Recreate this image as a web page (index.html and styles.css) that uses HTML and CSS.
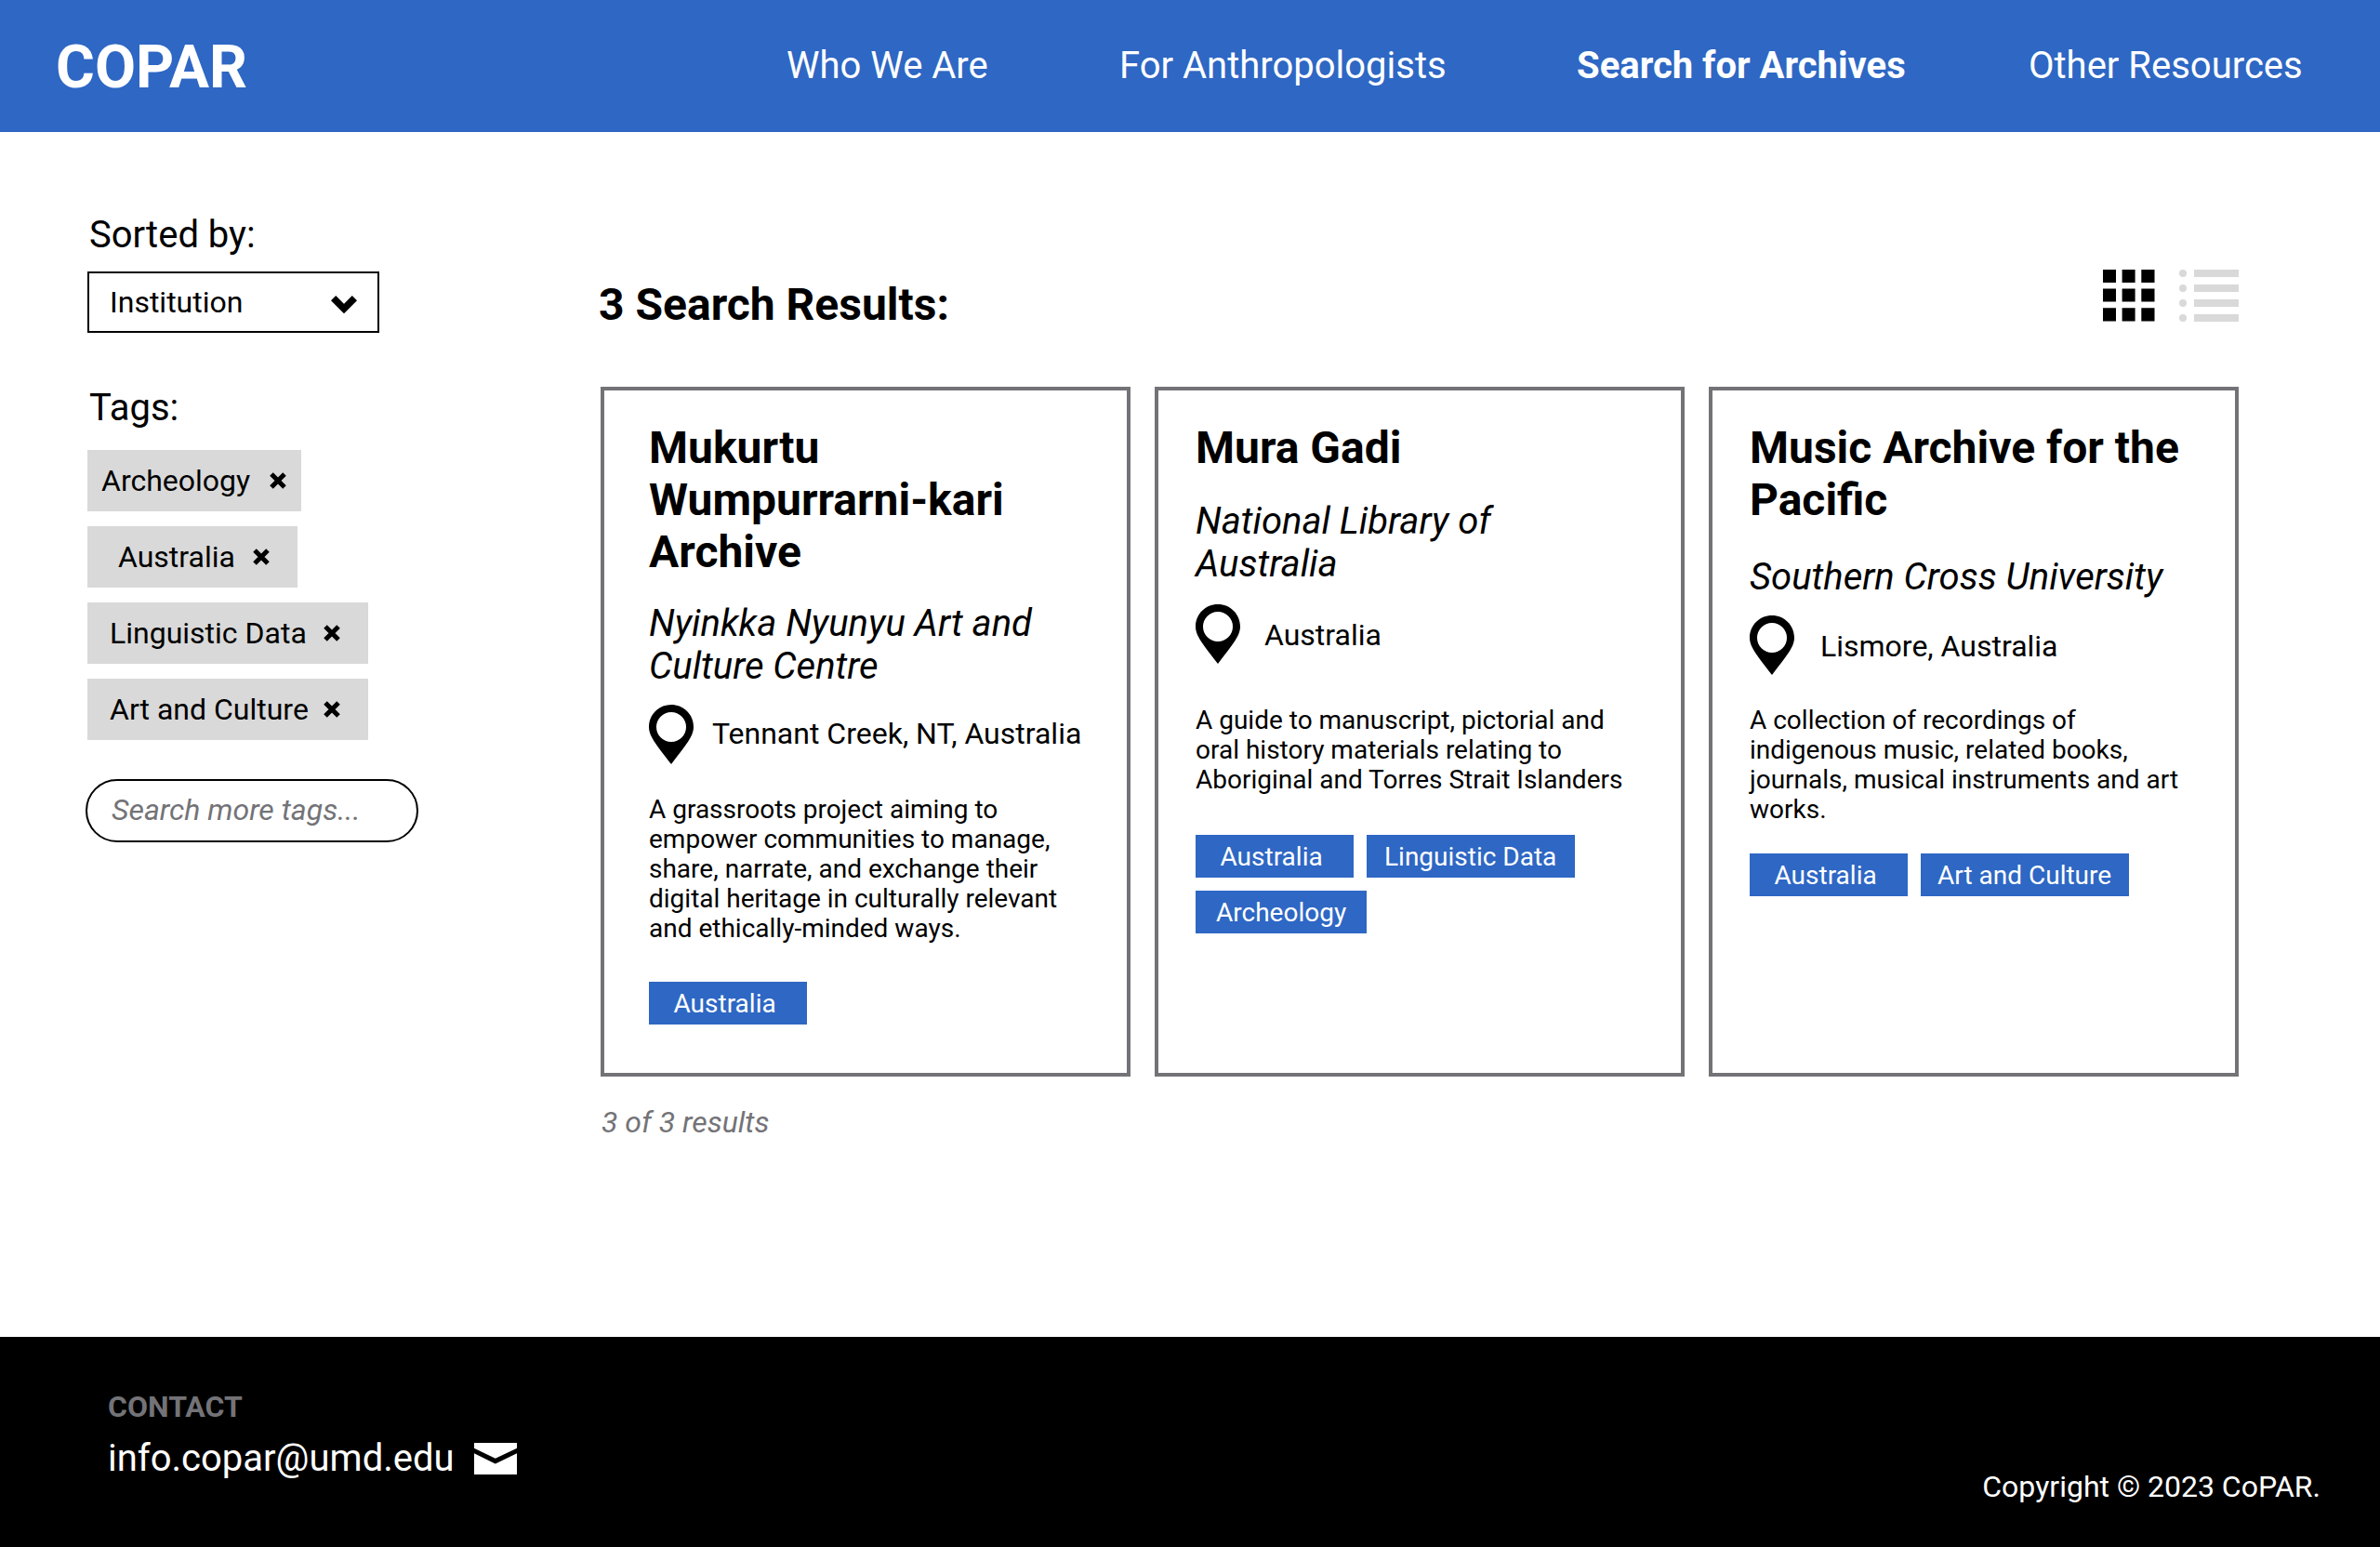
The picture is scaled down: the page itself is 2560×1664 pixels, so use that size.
FILE: index.html
```html
<!DOCTYPE html>
<html lang="en">
<head>
<meta charset="utf-8">
<title>COPAR - Search for Archives</title>
<link rel="stylesheet" href="styles.css">
</head>
<body>
<svg class="sprite" aria-hidden="true">
  <symbol id="pin" viewBox="0 0 48 64"><path fill-rule="evenodd" d="M24 0C10.700 0 0 10.500 0 23.800C0 33 5.500 40.500 24 64C42.500 40.500 48 33 48 23.800C48 10.500 37.300 0 24 0ZM24 8A16 16 0 1 1 24 40A16 16 0 1 1 24 8Z"/></symbol>
  <symbol id="close" viewBox="0 0 18 18"><path d="M2 2L16 16M16 2L2 16" fill="none" stroke="#000" stroke-width="5"/></symbol>
</svg>

<header class="header">
  <a class="logo">COPAR</a>
  <nav class="nav">
    <a>Who We Are</a>
    <a>For Anthropologists</a>
    <a class="active">Search for Archives</a>
    <a>Other Resources</a>
  </nav>
</header>

<main class="main">
  <aside class="sidebar">
    <h2 class="label">Sorted by:</h2>
    <div class="select">Institution
      <svg class="chevron" viewBox="0 0 28 20"><path d="M2.600 2.700L14 14.100L25.400 2.700" fill="none" stroke="#000" stroke-width="7.400"/></svg>
    </div>
    <h2 class="label label-tags">Tags:</h2>
    <ul class="filters">
      <li class="filter filter-archeology">Archeology <svg class="close"><use href="#close"/></svg></li>
      <li class="filter filter-australia">Australia <svg class="close"><use href="#close"/></svg></li>
      <li class="filter filter-wide">Linguistic Data <svg class="close"><use href="#close"/></svg></li>
      <li class="filter filter-wide">Art and Culture <svg class="close"><use href="#close"/></svg></li>
    </ul>
    <div class="search">Search more tags...</div>
  </aside>

  <section class="results">
    <div class="results-head">
      <h1 class="results-title">3 Search Results:</h1>
      <div class="views">
        <svg class="view-grid" viewBox="0 0 56 56">
          <path d="M0 0h14v14H0zM20.600 0h14v14h-14zM41.300 0h14.200v14H41.300zM0 20.600h14v14H0zM20.600 20.600h14v14h-14zM41.300 20.600h14.200v14H41.300zM0 41.300h14v14.200H0zM20.600 41.300h14v14.200h-14zM41.300 41.300h14.200v14.200H41.300z"/>
        </svg>
        <svg class="view-list" viewBox="0 0 64 56" fill="#d9d9d9">
          <circle cx="4" cy="4" r="4"/><circle cx="4" cy="20" r="4"/><circle cx="4" cy="36" r="4"/><circle cx="4" cy="52" r="4"/>
          <path d="M16 0h48v8H16zM16 16h48v8H16zM16 32h48v8H16zM16 48h48v8H16z"/>
        </svg>
      </div>
    </div>

    <div class="cards">
      <article class="card card-mukurtu">
        <h3 class="card-title">Mukurtu<br>Wumpurrarni-kari<br>Archive</h3>
        <p class="institution">Nyinkka Nyunyu Art and<br>Culture Centre</p>
        <p class="place"><svg class="pin"><use href="#pin"/></svg><span>Tennant Creek, NT, Australia</span></p>
        <p class="summary">A grassroots project aiming to<br>empower communities to manage,<br>share, narrate, and exchange their<br>digital heritage in culturally relevant<br>and ethically-minded ways.</p>
        <div class="tags"><span class="tag tag-australia">Australia</span></div>
      </article>

      <article class="card card-mura">
        <h3 class="card-title">Mura Gadi</h3>
        <p class="institution">National Library of<br>Australia</p>
        <p class="place"><svg class="pin"><use href="#pin"/></svg><span>Australia</span></p>
        <p class="summary">A guide to manuscript, pictorial and<br>oral history materials relating to<br>Aboriginal and Torres Strait Islanders</p>
        <div class="tags"><span class="tag tag-australia">Australia</span><span class="tag tag-linguistic">Linguistic Data</span><span class="tag tag-archeology">Archeology</span></div>
      </article>

      <article class="card card-music">
        <h3 class="card-title">Music Archive for the<br>Pacific</h3>
        <p class="institution">Southern Cross University</p>
        <p class="place"><svg class="pin"><use href="#pin"/></svg><span>Lismore, Australia</span></p>
        <p class="summary">A collection of recordings of<br>indigenous music, related books,<br>journals, musical instruments and art<br>works.</p>
        <div class="tags"><span class="tag tag-australia">Australia</span><span class="tag tag-culture">Art and Culture</span></div>
      </article>
    </div>
    <p class="count">3 of 3 results</p>
  </section>
</main>

<footer class="footer">
  <div class="contact">
    <h2 class="contact-title">CONTACT</h2>
    <p class="email">info.copar@umd.edu
      <svg class="envelope" viewBox="0 0 46 34" fill="#fff"><path d="M0 0H46V5.700L22.800 16.800L0 5.700Z"/><path d="M0 11.200L22.800 22.600L46 11.200V34H0Z"/></svg>
    </p>
  </div>
  <p class="copyright">Copyright © 2023 CoPAR.</p>
</footer>
</body>
</html>
```
FILE: styles.css
```css
* { box-sizing: border-box; margin: 0; padding: 0; }

body {
  width: 2560px;
  height: 1664px;
  display: flex;
  flex-direction: column;
  background: #fff;
  color: #000;
  font-family: Roboto, sans-serif;
  font-size: 32px;
  line-height: 38px;
  white-space: nowrap;
}

svg { display: block; flex: none; }
.sprite { display: none; }

/* Header */
.header {
  height: 142px;
  padding: 35px 60px 0;
  display: flex;
  align-items: flex-start;
  background: #2e67c4;
  color: #fff;
}
.logo { width: 786px; font-size: 64px; line-height: 75px; font-weight: 700; }
.nav {
  display: grid;
  grid-template-columns: 358px 492px 486px auto;
  padding-top: 13px;
  font-size: 40px;
  line-height: 46px;
}
.active { font-weight: 700; }

/* Page body */
.main { height: 1296px; display: flex; padding-left: 92px; }

.sidebar { width: 552px; padding-top: 88px; }
.label { padding-left: 4px; font-size: 40px; line-height: 46px; font-weight: 400; }
.select {
  width: 314px;
  height: 66px;
  margin: 16px 0 0 2px;
  padding: 0 22px;
  border: 2px solid #000;
  display: flex;
  align-items: center;
  justify-content: space-between;
}
.chevron { width: 28px; height: 20px; margin-top: 5px; }
.label-tags { margin-top: 58px; }

.filters {
  margin: 22px 0 0 2px;
  list-style: none;
  display: flex;
  flex-direction: column;
  align-items: flex-start;
  gap: 16px;
}
.filter { height: 66px; display: flex; align-items: center; justify-content: space-between; background: #d9d9d9; }
.filter-archeology { width: 230px; padding: 0 16px 0 15px; }
.filter-australia { width: 226px; padding: 0 30px 0 33px; }
.filter-wide { width: 302px; padding: 0 30px 0 24px; }
.close { width: 18px; height: 18px; }

.search {
  width: 358px;
  height: 68px;
  margin-top: 42px;
  padding: 12px 26px;
  border: 2px solid #000;
  border-radius: 34px;
  color: #737377;
  font-style: italic;
}

/* Results */
.results { width: 1764px; padding-top: 148px; }
.results-head { height: 126px; display: flex; justify-content: space-between; }
.results-title { padding-top: 10px; font-size: 48px; line-height: 56px; font-weight: 700; }
.views { display: flex; gap: 26px; }
.view-grid { width: 56px; height: 56px; }
.view-list { width: 64px; height: 56px; }

.cards { display: grid; grid-template-columns: repeat(3, 570px); gap: 26px; margin-left: 2px; }
.card { height: 742px; padding: 34px 0 0 36px; border: 4px solid #737377; }
.card { padding-left: 40px; }
.card-title { font-size: 48px; line-height: 56px; font-weight: 700; }
.institution { font-size: 40px; line-height: 46px; font-style: italic; }
.place { display: flex; align-items: flex-start; height: 64px; }
.place span { padding-top: 14px; }
.pin { width: 48px; height: 64px; }
.summary { font-size: 28px; line-height: 32px; }
.tags { display: flex; flex-wrap: wrap; gap: 14px; }
.tag { height: 46px; padding-top: 1px; background: #2e67c4; color: #fff; font-size: 28px; line-height: 46px; }
.tag-australia { width: 170px; padding-left: 26.5px; }
.tag-linguistic { width: 224px; padding-left: 19px; }
.tag-culture { width: 224px; padding-left: 18px; }
.tag-archeology { width: 184px; padding-left: 22px; }

.card-mukurtu { padding-left: 48px; }
.card-mukurtu .institution { margin-top: 26px; }
.card-mukurtu .place { margin-top: 18px; gap: 20px; }
.card-mukurtu .place span { padding-top: 12px; }
.card-mukurtu .summary { margin-top: 33px; }
.card-mukurtu .tags { margin-top: 41px; }

.card-mura .institution { margin-top: 28px; }
.card-mura .place { margin-top: 20px; gap: 26px; }
.card-mura .summary { margin-top: 45px; }
.card-mura .tags { margin-top: 43px; }

.card-music .institution { margin-top: 32px; }
.card-music .place { margin-top: 18px; gap: 28px; }
.card-music .summary { margin-top: 33px; }
.card-music .tags { margin-top: 31px; }

.count { margin: 30px 0 0 3px; color: #737377; font-style: italic; }

/* Footer */
.footer {
  height: 226px;
  padding: 56px 64px 0 116px;
  display: flex;
  justify-content: space-between;
  background: #000;
  color: #fff;
}
.contact-title { color: #737377; font-size: 32px; font-weight: 700; }
.email { display: flex; gap: 21px; margin-top: 14px; font-size: 40px; line-height: 46px; }
.envelope { width: 46px; height: 34px; margin-top: 6px; }
.copyright { margin-top: 86px; }
```
